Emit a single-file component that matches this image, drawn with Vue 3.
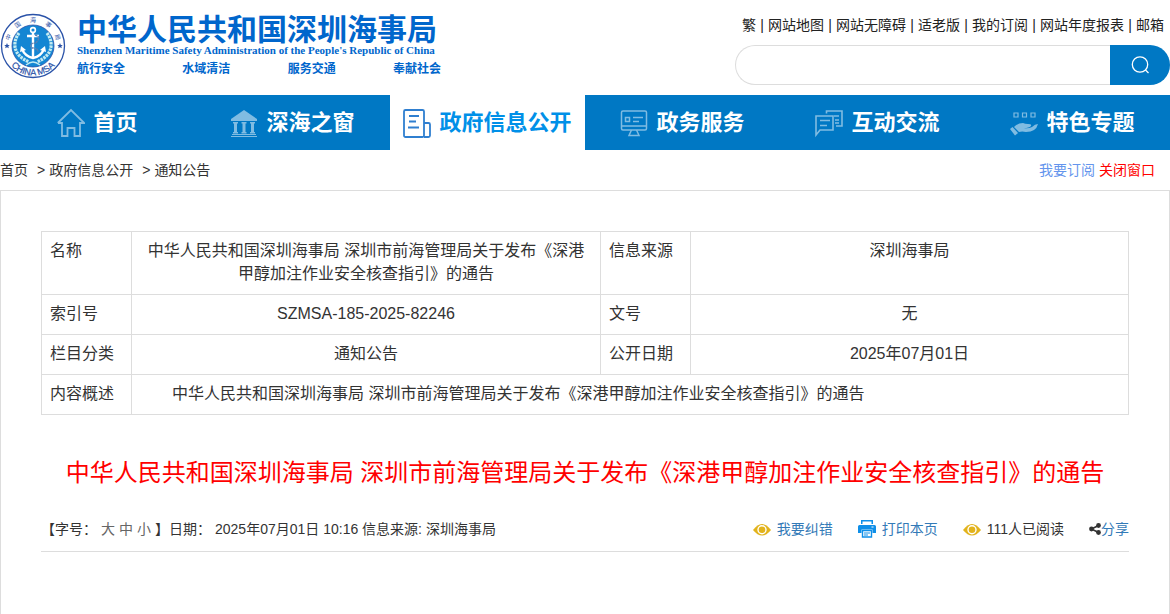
<script setup>
import { ref } from 'vue';

const keyword = ref('');
const currentNav = ref('政府信息公开');

const topLinks = ['繁', '网站地图', '网站无障碍', '适老版', '我的订阅', '网站年度报表', '邮箱'];
const slogans = ['航行安全', '水域清洁', '服务交通', '奉献社会'];

// 徽标上方的环形文字
const ringWords = [
  { word: '中', offset: '11%' },
  { word: '国', offset: '30%' },
  { word: '海', offset: '50%' },
  { word: '事', offset: '70%' },
  { word: '局', offset: '89%' },
];

const navs = [
  { name: '首页', icon: 'home' },
  { name: '深海之窗', icon: 'bank' },
  { name: '政府信息公开', icon: 'doc' },
  { name: '政务服务', icon: 'screen' },
  { name: '互动交流', icon: 'chat' },
  { name: '特色专题', icon: 'hand' },
];

const fontSizes = ['大', '中', '小'];

const title = '中华人民共和国深圳海事局 深圳市前海管理局关于发布《深港甲醇加注作业安全核查指引》的通告';
</script>

<template>
  <div class="page">
    <header class="header">
      <a class="logo" href="#">
        <svg class="emblem" viewBox="0 0 66 66" width="66" height="66">
          <defs>
            <path id="ring-top" d="M9 33 A24 24 0 0 1 57 33" />
            <path id="ring-bottom" d="M3.500 33 A29.500 29.500 0 0 0 62.500 33" />
          </defs>
          <circle cx="33" cy="33" r="31.500" fill="#fff" stroke="#2a52a8" stroke-width="1.300" />
          <circle cx="33" cy="33" r="21" fill="#1486d3" stroke="#2a52a8" stroke-width="0.800" />
          <text v-for="item in ringWords" :key="item.word" class="ring-cn">
            <textPath href="#ring-top" :startOffset="item.offset" text-anchor="middle">{{ item.word }}</textPath>
          </text>
          <text class="ring-en"><textPath href="#ring-bottom" startOffset="50%" text-anchor="middle">CHINA MSA</textPath></text>
          <path fill="#2a52a8" d="M7 30l.8 1.900 2 .1-1.500 1.300.5 2-1.800-1.100-1.800 1.100.5-2L4.200 32l2-.1zM60 30l.8 1.900 2 .1-1.500 1.300.5 2-1.800-1.100-1.800 1.100.5-2-1.500-1.300 2-.1z" />
          <g fill="none" stroke="#c3ebf2" stroke-width="3.200" stroke-dasharray="2.500 .8">
            <path d="M19 20 C12 30 13 42 29 49" />
            <path d="M47 20 C54 30 53 42 37 49" />
          </g>
          <path d="M26 52q4-3 7-3t7 3" fill="none" stroke="#c3ebf2" stroke-width="1.500" />
          <g fill="none" stroke="#fff" stroke-width="2.400">
            <circle cx="33" cy="17" r="2.400" stroke-width="1.600" />
            <path d="M33 19v26M27 23h12" />
            <path d="M22 36c2 5 6 8 11 9 5-1 9-4 11-9" />
          </g>
          <path fill="#fff" d="M20 39l1-6 5 4zM46 39l-1-6-5 4z" />
          <path d="M35 22q5 1 3 5t-5 3q-4 2-1 5 6 0 6 4" fill="none" stroke="#5c7fb0" stroke-width="1.500" stroke-dasharray="2 .7" />
        </svg>
        <div class="logo-text">
          <strong class="logo-cn">中华人民共和国深圳海事局</strong>
          <span class="logo-en">Shenzhen Maritime Safety Administration of the People's Republic of China</span>
          <span class="slogans">
            <b v-for="item in slogans" :key="item">{{ item }}</b>
          </span>
        </div>
      </a>

      <div class="header-right">
        <div class="top-links">
          <template v-for="(link, index) in topLinks" :key="link">
            <span v-if="index > 0" class="split">|</span>
            <a href="#">{{ link }}</a>
          </template>
        </div>
        <form class="search" @submit.prevent>
          <input v-model="keyword" type="text" aria-label="搜索">
          <button type="submit" aria-label="搜索">
            <svg viewBox="0 0 20 20" width="20" height="20" fill="none" stroke="#fff" stroke-width="1.300">
              <circle cx="10" cy="9.500" r="7.700" />
              <path d="M15.500 15l3 3" />
            </svg>
          </button>
        </form>
      </div>
    </header>

    <nav class="nav">
      <a
        v-for="nav in navs"
        :key="nav.name"
        href="#"
        class="nav-item"
        :class="{ active: currentNav === nav.name }"
        @click.prevent="currentNav = nav.name"
      >
        <svg class="nav-icon" viewBox="0 0 28 30" width="28" height="30">
          <g v-if="nav.icon === 'home'" fill="none" stroke="currentColor" stroke-width="1.800">
            <path d="M.8 15L14 2l13.200 13H23v13h-5.500v-8h-7v8H5V15H1" />
          </g>
          <g v-else-if="nav.icon === 'bank'" fill="currentColor">
            <path d="M14 2L27 11v2H1v-2z" />
            <path d="M3 14h5v1.500H7V24h1v1.500H3V24h1v-8.500H3zM11.500 14h5v1.500h-1V24h1v1.500h-5V24h1v-8.500h-1zM20 14h5v1.500h-1V24h1v1.500h-5V24h1v-8.500h-1zM2 26h24v1H2zM1 28h26v1H1z" />
          </g>
          <g v-else-if="nav.icon === 'doc'" fill="none" stroke="currentColor" stroke-width="1.800">
            <rect x="1" y="2" width="20" height="27" rx="1.500" />
            <path d="M21 15h4.500q1.500 0 1.500 1.500v11q0 1.500-1.500 1.500H21M6 8h10M6 13.500h7M5 19.500h11" />
          </g>
          <g v-else-if="nav.icon === 'screen'" fill="none" stroke="currentColor" stroke-width="1.500">
            <rect x="1.500" y="3" width="25" height="19" rx="1.500" />
            <path d="M2 18h24M11.500 22l-2.500 5.500h10L16.500 22M13 9.500h10M13 13.500h6" />
            <rect x="5.500" y="9.500" width="4" height="4" />
          </g>
          <g v-else-if="nav.icon === 'chat'" fill="none" stroke="currentColor" stroke-width="1.600">
            <path d="M1 8h17v14H5l-4 5zM5 12.500h10M5 17.500h7" />
            <path d="M11.500 5.500V3H27v15h-6M19 8h5M20 12h4M20 15h4" />
          </g>
          <g v-else>
            <path d="M4 5h4v4H4zM12.500 5h4v4h-4zM21 5h4v4h-4z" fill="none" stroke="currentColor" stroke-width="1.200" />
            <path d="M4 19q4-4 9-4 2 1 5 1 4 0 3 2-2 2-7 2 4 1 8-1 3-3 6-3-1 4-4 6-3 2-8 2-4-1-7 0zM0 21l2.500-2 5.500 6-3 2.500z" fill="currentColor" />
          </g>
        </svg>
        <span>{{ nav.name }}</span>
      </a>
    </nav>

    <div class="location">
      <div class="crumbs">
        <a href="#">首页</a>
        <span class="arrow">&gt;</span>
        <a href="#">政府信息公开</a>
        <span class="arrow">&gt;</span>
        <a href="#">通知公告</a>
      </div>
      <div class="location-actions">
        <a class="subscribe" href="#">我要订阅</a>
        <a class="close" href="#">关闭窗口</a>
      </div>
    </div>

    <main class="content">
      <table class="info">
        <colgroup>
          <col class="col-label">
          <col class="col-name">
          <col class="col-label">
          <col>
        </colgroup>
        <tbody>
          <tr>
            <th scope="row">名称</th>
            <td>{{ title }}</td>
            <th scope="row">信息来源</th>
            <td>深圳海事局</td>
          </tr>
          <tr>
            <th scope="row">索引号</th>
            <td>SZMSA-185-2025-82246</td>
            <th scope="row">文号</th>
            <td>无</td>
          </tr>
          <tr>
            <th scope="row">栏目分类</th>
            <td>通知公告</td>
            <th scope="row">公开日期</th>
            <td>2025年07月01日</td>
          </tr>
          <tr>
            <th scope="row">内容概述</th>
            <td class="summary" colspan="3">{{ title }}</td>
          </tr>
        </tbody>
      </table>

      <h1 class="title">{{ title }}</h1>

      <div class="meta">
        <div class="meta-left">
          <span>【字号：</span>
          <a v-for="size in fontSizes" :key="size" class="size" href="#">{{ size }}</a>
          <span>】日期：</span>
          <span class="date">2025年07月01日 10:16 信息来源: 深圳海事局</span>
        </div>
        <div class="meta-right">
          <a class="tool" href="#">
            <svg viewBox="0 0 18 18" width="18" height="18">
              <path d="M0 10q9-12 18 0-9 11-18 0z" fill="#e2b31c" />
              <circle cx="9" cy="9.800" r="4" fill="none" stroke="#fff" stroke-width="1.400" />
            </svg>
            我要纠错
          </a>
          <a class="tool" href="#">
            <svg viewBox="0 0 18 18" width="18" height="18">
              <path d="M3 0h12v4h-1.500V1.500h-9V4H3z" fill="#0f8fe8" />
              <path d="M1.500 5h15Q18 5 18 6.500V13h-3.500V9.500h-11V13H0V6.500Q0 5 1.500 5z" fill="#0f8fe8" />
              <path d="M4.500 10.500h9V17h-9z" fill="#fff" stroke="#0f8fe8" stroke-width="1.400" />
              <path d="M6 13h6M6 15h4" stroke="#0f8fe8" />
              <path d="M13.500 7h2" stroke="#fff" />
            </svg>
            打印本页
          </a>
          <span class="tool read">
            <svg viewBox="0 0 18 18" width="18" height="18">
              <path d="M0 10q9-12 18 0-9 11-18 0z" fill="#e2b31c" />
              <circle cx="9" cy="9.800" r="4" fill="none" stroke="#fff" stroke-width="1.400" />
            </svg>
            111人已阅读
          </span>
          <a class="tool share" href="#">
            <svg viewBox="0 0 12 12" width="12" height="12">
              <path d="M9.500 2.500L2.500 6l7 3.500" fill="none" stroke="#333" stroke-width="1.600" />
              <g fill="#333">
                <circle cx="9.500" cy="2.500" r="2.400" />
                <circle cx="2.500" cy="6" r="2.400" />
                <circle cx="9.500" cy="9.500" r="2.400" />
              </g>
            </svg>
            分享
          </a>
        </div>
      </div>
    </main>
  </div>
</template>

<style>
body {
  margin: 0;
  background: #fff;
}
</style>

<style scoped>
.page {
  display: flex;
  flex-direction: column;
  min-height: 100vh;
  color: #333;
  font-family: "Liberation Sans", "Noto Sans CJK SC", sans-serif;
  font-size: 14px;
  line-height: 20px;
}

.page * {
  box-sizing: border-box;
}

a {
  color: inherit;
  text-decoration: none;
}

/* 头部 */
.header {
  display: flex;
  justify-content: space-between;
  height: 95px;
}

.logo {
  display: flex;
  gap: 11px;
  padding-top: 13px;
  color: #0066cc;
}

.ring-cn {
  font-size: 6px;
  fill: #2a52a8;
}

.ring-en {
  font-size: 9px;
  fill: #2a52a8;
  stroke: #2a52a8;
  stroke-width: 0.2px;
}

.logo-text {
  display: flex;
  flex-direction: column;
  width: 364px;
}

.logo-cn {
  font-size: 30px;
  line-height: 34px;
}

.logo-en {
  font-family: "Liberation Serif", serif;
  font-size: 11px;
  font-weight: bold;
  line-height: 6px;
  white-space: nowrap;
}

.slogans {
  display: flex;
  justify-content: space-between;
  margin-top: 8px;
  font-size: 12px;
  line-height: 16px;
}

.header-right {
  width: 435px;
  padding-top: 15px;
}

.top-links {
  display: flex;
  justify-content: flex-end;
  padding-right: 6px;
  color: #222;
}

.split {
  width: 12px;
  text-align: center;
}

.search {
  display: flex;
  height: 40px;
  margin-top: 10px;
}

.search input {
  flex: 1;
  min-width: 0;
  padding: 0 20px;
  border: 1px solid #ddd;
  border-right: none;
  border-radius: 20px 0 0 20px;
  outline: none;
  font-size: 14px;
}

.search button {
  display: flex;
  align-items: center;
  justify-content: center;
  width: 60px;
  padding: 0;
  border: none;
  border-radius: 0 20px 20px 0;
  background: #0078c4;
  cursor: pointer;
}

/* 导航 */
.nav {
  display: flex;
  background: #0078c4;
}

.nav-item {
  display: flex;
  flex: 1;
  align-items: center;
  justify-content: center;
  gap: 8px;
  height: 55px;
  color: #fff;
  font-size: 22px;
  font-weight: bold;
  line-height: 30px;
  white-space: nowrap;
}

.nav-icon {
  color: #80bce2;
}

.nav-item.active {
  background: #fff;
  color: #0090e8;
}

.nav-item.active .nav-icon {
  color: #2f7fd0;
}

/* 当前位置 */
.location {
  display: flex;
  align-items: center;
  justify-content: space-between;
  height: 40px;
  padding-right: 15px;
}

.crumbs {
  display: flex;
}

.arrow {
  margin: 0 4px 0 9px;
}

.location-actions {
  display: flex;
  gap: 4px;
}

.subscribe {
  color: #6495ed;
}

.close {
  color: #f00;
}

/* 正文 */
.content {
  flex: 1;
  padding: 40px 40px 0;
  border: 1px solid #ddd;
  border-bottom: none;
}

.info {
  width: 100%;
  border-collapse: collapse;
  table-layout: fixed;
  font-size: 16px;
  line-height: 23px;
}

.col-label {
  width: 90px;
}

.col-name {
  width: 469px;
}

.info th,
.info td {
  padding: 7px 8px 9px;
  border: 1px solid #ddd;
  vertical-align: top;
}

.info th {
  font-weight: normal;
  text-align: left;
}

.info td {
  text-align: center;
}

.info .summary {
  padding-left: 40px;
  text-align: left;
}

.title {
  margin: 40px 0 24px;
  color: #f00;
  font-size: 24px;
  font-weight: normal;
  line-height: 36px;
  text-align: center;
}

.meta {
  display: flex;
  justify-content: space-between;
  padding: 4px 0 12px;
  border-bottom: 1px solid #ddd;
}

.meta-left {
  display: flex;
  gap: 4px;
}

.date {
  margin-left: 0;
}

.size {
  color: #666;
}

.meta-right {
  display: flex;
  gap: 25px;
}

.tool {
  display: flex;
  align-items: center;
  gap: 6px;
  color: #337ab7;
}

.tool.read {
  color: #333;
}

.tool.share {
  gap: 0;
}
</style>
